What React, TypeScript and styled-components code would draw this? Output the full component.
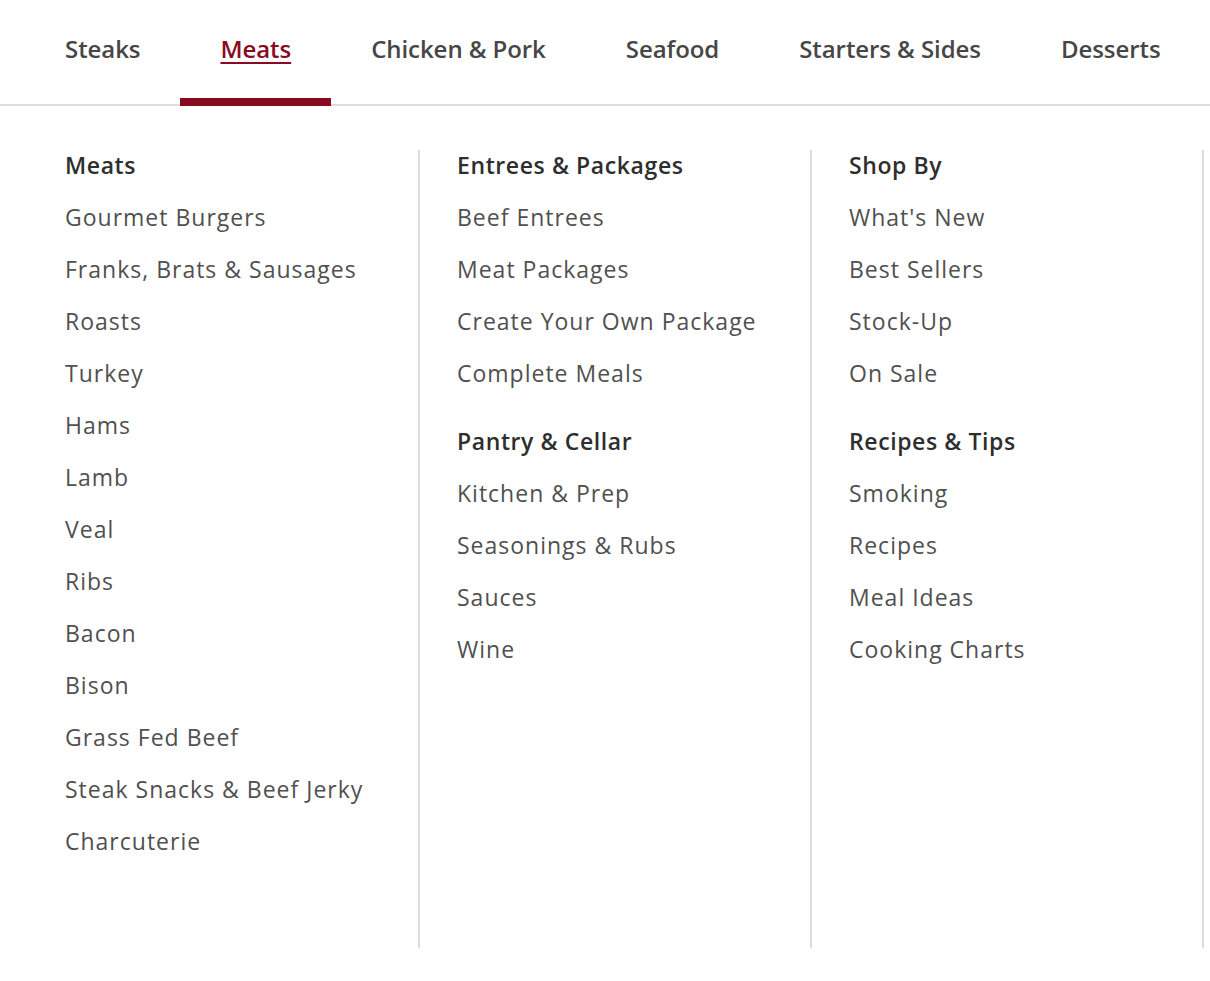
import React from "react";
import styled, { createGlobalStyle } from "styled-components";

const GlobalStyle = createGlobalStyle`
  body {
    margin: 0;
    background: #fff;
    font-family: "Open Sans", "Liberation Sans", sans-serif;
  }
`;

const tabs = ["Steaks", "Meats", "Chicken & Pork", "Seafood", "Starters & Sides", "Desserts"];

const columns = [
  [
    {
      title: "Meats",
      links: [
        "Gourmet Burgers",
        "Franks, Brats & Sausages",
        "Roasts",
        "Turkey",
        "Hams",
        "Lamb",
        "Veal",
        "Ribs",
        "Bacon",
        "Bison",
        "Grass Fed Beef",
        "Steak Snacks & Beef Jerky",
        "Charcuterie",
      ],
    },
  ],
  [
    {
      title: "Entrees & Packages",
      links: ["Beef Entrees", "Meat Packages", "Create Your Own Package", "Complete Meals"],
    },
    {
      title: "Pantry & Cellar",
      links: ["Kitchen & Prep", "Seasonings & Rubs", "Sauces", "Wine"],
    },
  ],
  [
    {
      title: "Shop By",
      links: ["What's New", "Best Sellers", "Stock-Up", "On Sale"],
    },
    {
      title: "Recipes & Tips",
      links: ["Smoking", "Recipes", "Meal Ideas", "Cooking Charts"],
    },
  ],
];

const Nav = styled.nav`
  display: flex;
  padding-left: 25px;
  border-bottom: 2px solid #dddddb;
`;

const Tab = styled.a<{ $active?: boolean }>`
  position: relative;
  display: block;
  height: 104px;
  box-sizing: border-box;
  padding: 33px 40px 0;
  font-size: 24px;
  line-height: 32px;
  font-weight: 600;
  letter-spacing: -0.07px;
  color: ${(p) => (p.$active ? "#8a0b20" : "#464646")};
  text-decoration: ${(p) => (p.$active ? "underline" : "none")};
  text-underline-offset: 4px;
  text-decoration-thickness: 2px;
  cursor: pointer;

  &::after {
    content: "";
    display: ${(p) => (p.$active ? "block" : "none")};
    position: absolute;
    left: 0;
    right: 0;
    bottom: -2px;
    height: 8px;
    background: #8a0b20;
  }
`;

const Menu = styled.div`
  display: grid;
  grid-template-columns: repeat(3, 392px);
  padding-left: 28px;
  margin-top: 44px;
`;

const Column = styled.div`
  box-sizing: border-box;
  padding: 0 0 81px 37px;
  border-right: 2px solid #dedcd8;
`;

const Group = styled.div`
  & + & {
    margin-top: 27px;
  }
`;

const Heading = styled.h3`
  margin: 0 0 11px;
  font-size: 23px;
  line-height: 30px;
  font-weight: 600;
  letter-spacing: 0.6px;
  color: #2e2e2e;
`;

const LinkList = styled.ul`
  list-style: none;
  margin: 0;
  padding: 0;
`;

const Item = styled.li`
  font-size: 23px;
  line-height: 52px;
  letter-spacing: 1px;
  color: #505050;
  white-space: nowrap;
`;

const App = () => {
  return (
    <>
      <GlobalStyle />
      <Nav>
        {tabs.map((t) => (
          <Tab key={t} $active={t === "Meats"}>
            {t}
          </Tab>
        ))}
      </Nav>
      <Menu>
        {columns.map((groups, i) => (
          <Column key={i}>
            {groups.map((g) => (
              <Group key={g.title}>
                <Heading>{g.title}</Heading>
                <LinkList>
                  {g.links.map((l) => (
                    <Item key={l}>{l}</Item>
                  ))}
                </LinkList>
              </Group>
            ))}
          </Column>
        ))}
      </Menu>
    </>
  );
};

export default App;
